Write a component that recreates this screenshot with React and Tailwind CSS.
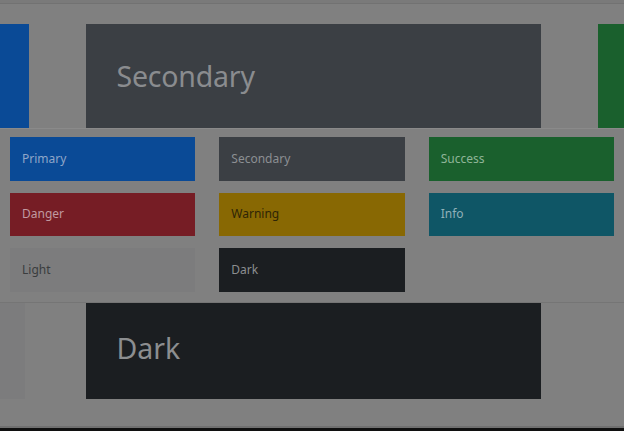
export default function App() {
  const font = { fontFamily: '"Noto Sans", "Open Sans", sans-serif' };
  const items = [
    { label: "Primary", bg: "bg-[#0a4a96]", text: "text-[#8fa6c8]" },
    { label: "Secondary", bg: "bg-[#3b3f44]", text: "text-[#8c8f93]" },
    { label: "Success", bg: "bg-[#1a602d]", text: "text-[#8fb598]" },
    { label: "Danger", bg: "bg-[#761d25]", text: "text-[#c09aa0]" },
    { label: "Warning", bg: "bg-[#886803]", text: "text-[#2e2506]" },
    { label: "Info", bg: "bg-[#0f5666]", text: "text-[#8fb0b8]" },
    { label: "Light", bg: "bg-[#7c7c7d]", text: "text-[#3a3c3e]" },
    { label: "Dark", bg: "bg-[#1b1e21]", text: "text-[#8c8e90]" },
  ];
  return (
    <div className="w-[624px] h-[431px] overflow-hidden bg-[#808080] flex flex-col" style={font}>
      <div className="h-[4px] bg-[#7a7a7a] border-b border-[#727272]"></div>
      <div className="h-[20px]"></div>
      <div className="h-[104px] flex gap-[57px] justify-center pl-[2px]">
        <div className="w-[455px] shrink-0 bg-[#0a4a96]"></div>
        <div className="w-[455px] shrink-0 bg-[#3b3f44] flex items-center pl-[31px]">
          <span className="text-[28.5px] text-[#8a8c8f] leading-none tracking-[-0.2px]">Secondary</span>
        </div>
        <div className="w-[455px] shrink-0 bg-[#1a602d]"></div>
      </div>
      <div className="h-[175px] border-t border-[#8a8a8a] border-b border-b-[#757575] bg-[#808080] px-[10px] pt-[8px] pb-[10px]">
        <div className="grid grid-cols-3 gap-x-[24px] gap-y-[12px]">
          {items.map((it) => (
            <div key={it.label} className={`h-[43.5px] ${it.bg} flex items-center pl-[12px]`}>
              <span className={`text-[12px] ${it.text}`}>{it.label}</span>
            </div>
          ))}
        </div>
      </div>
      <div className="h-[96px] flex gap-[57px] justify-center pl-[2px]">
        <div className="w-[455px] shrink-0 bg-[#7c7c7d] relative -left-[4px]"></div>
        <div className="w-[455px] shrink-0 bg-[#1b1e21] flex items-center pl-[31px] pb-[6px]">
          <span className="text-[28.5px] text-[#8c8e90] leading-none">Dark</span>
        </div>
        <div className="w-[455px] shrink-0"></div>
      </div>
      <div className="flex-1"></div>
      <div className="h-[5px] border-t-2 border-[#707070] bg-[#101010]"></div>
    </div>
  );
}
